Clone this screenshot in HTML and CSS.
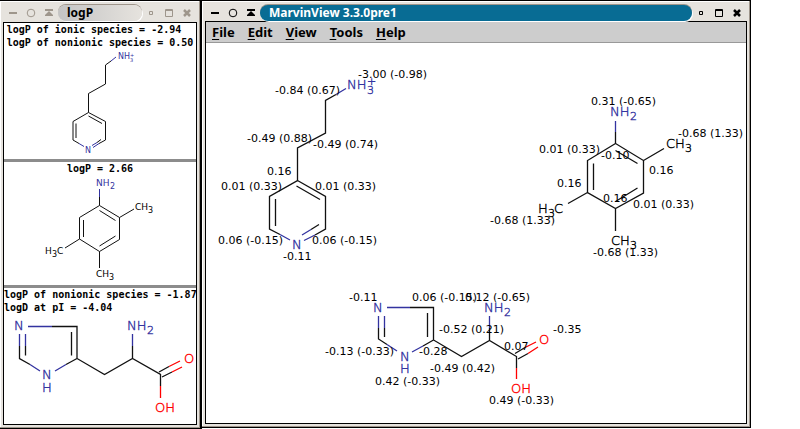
FILE: index.html
```html
<!DOCTYPE html>
<html lang="en">
<head>
<meta charset="utf-8">
<title>MarvinView 3.3.0pre1</title>
<link rel="stylesheet" href="styles.css">
</head>
<body>
<main class="desktop">
  <section class="window window-side" aria-label="logP">
    <header class="titlebar">
      <button class="tool" aria-label="Minimize"><svg viewBox="0 0 18 18"><path class="fill" d="M5 8h8v2H5z"/></svg></button>
      <button class="tool" aria-label="Stick"><svg viewBox="0 0 18 18"><circle class="line" cx="9" cy="9" r="3.8"/></svg></button>
      <button class="tool" aria-label="Shade"><svg viewBox="0 0 18 18"><path class="fill" d="M5 5h8v2H5zM9 7l4 4v1H5v-1z"/></svg></button>
      <h1 class="caption">logP</h1>
      <button class="tool" aria-label="Restore"><svg viewBox="0 0 18 18"><path class="line" d="M7.500 7.500h3v3h-3z"/></svg></button>
      <button class="tool" aria-label="Maximize"><svg viewBox="0 0 18 18"><path class="line" d="M5.500 5.500h7v7h-7zM5.500 6.500h7"/></svg></button>
      <button class="tool" aria-label="Close"><svg viewBox="0 0 18 18"><path class="cross" d="M6 6l6 6M12 6l-6 6"/></svg></button>
    </header>
    <div class="client">
      <article class="cell">
        <p class="result">logP of ionic species = -2.94<br>logP of nonionic species = 0.50</p>
        <svg class="molecule" viewBox="4 49 192 110">
          <path class="bond thin" d="M111 61L105.500 65V84L88.500 93.500V112.500L73 121.500V140L79 143.500M88.500 112.500L105.500 121.500V140L99 143.500M76 123.500V138M88.500 116L102 123.500M97 142.500L101 139.500"/>
          <path class="bond thin n" d="M116 57L111 61M79 143.500L84 146.500M99 143.500L93 147.500M97 142.500L92 145.500"/>
          <g class="atom small n"><text x="118" y="59">NH</text><text class="tiny" x="130" y="62">3</text><text class="tiny" x="130" y="57">+</text><text x="85" y="153">N</text></g>
        </svg>
      </article>
      <article class="cell">
        <p class="result">logP = 2.66</p>
        <svg class="molecule" viewBox="4 175 192 110">
          <path class="bond thin" d="M99.500 197V205.500L119.500 217.500V239.500L99.500 251.500L79.500 239V217.500L99.500 205.500M99.500 210.500L115.500 220.500M83.500 220V237M99.500 246L115.500 236M119.500 217.500L134 209M79.500 239L65 248M99.500 251.500V268"/>
          <path class="bond thin n" d="M99.500 189V197"/>
          <g class="atom medium"><g class="n"><text x="96" y="186">NH</text><text class="sub" x="110" y="189">2</text></g>
          <text x="135" y="210">CH</text><text class="sub" x="148" y="213">3</text>
          <text x="45" y="254">H</text><text class="sub" x="52" y="257">3</text><text x="57" y="254">C</text>
          <text x="96" y="277">CH</text><text class="sub" x="109" y="280">3</text></g>
        </svg>
      </article>
      <article class="cell">
        <p class="result">logP of nonionic species = -1.87<br>logD at pI = -4.04</p>
        <svg class="molecule" viewBox="4 314 192 110">
          <path class="bond" d="M52 326.500H77V358.500L104.500 374.500L132.500 358.500L160.500 374.500V386M71.500 332V355.500M19.500 346V358.500L30 364.500M25.500 346V355.500M66 364.500L77 358.500M132.500 346V358.500M159 372L169 366.500M162 377L172 372"/>
          <path class="bond n" d="M28 326.500H52M19.500 334V346M25.500 334V346M30 364.500L40 371M55 371L66 364.500M132.500 334V346"/>
          <path class="bond o" d="M160.500 386V398M169 366.500L180 361M172 372L182 367"/>
          <g class="atom"><g class="n"><text x="14" y="330">N</text><text x="42" y="379">N</text><text x="42" y="392">H</text><text x="127" y="330">NH</text><text class="sub" x="147" y="334">2</text></g>
          <g class="o"><text x="184" y="363">O</text><text x="155" y="412">OH</text></g></g>
        </svg>
      </article>
    </div>
  </section>

  <section class="window window-main" aria-label="MarvinView 3.3.0pre1">
    <header class="titlebar">
      <button class="tool" aria-label="Minimize"><svg viewBox="0 0 18 18"><path class="fill" d="M5 8h8v2H5z"/></svg></button>
      <button class="tool" aria-label="Stick"><svg viewBox="0 0 18 18"><circle class="line" cx="9" cy="9" r="3.8"/></svg></button>
      <button class="tool" aria-label="Shade"><svg viewBox="0 0 18 18"><path class="fill" d="M5 5h8v2H5zM9 7l4 4v1H5v-1z"/></svg></button>
      <h1 class="caption">MarvinView 3.3.0pre1</h1>
      <button class="tool" aria-label="Restore"><svg viewBox="0 0 18 18"><path class="line" d="M7.500 7.500h3v3h-3z"/></svg></button>
      <button class="tool" aria-label="Maximize"><svg viewBox="0 0 18 18"><path class="line" d="M5.500 5.500h7v7h-7zM5.500 6.500h7"/></svg></button>
      <button class="tool" aria-label="Close"><svg viewBox="0 0 18 18"><path class="cross" d="M6 6l6 6M12 6l-6 6"/></svg></button>
    </header>
    <div class="client">
      <nav class="menubar">
        <button class="menu"><u>F</u>ile</button>
        <button class="menu"><u>E</u>dit</button>
        <button class="menu"><u>V</u>iew</button>
        <button class="menu"><u>T</u>ools</button>
        <button class="menu"><u>H</u>elp</button>
      </nav>
      <svg class="molecule canvas" viewBox="206 43 540 380">
        <path class="bond" d="M336 94.500L325.500 100.500V133L297.500 148V180.500L269.500 196.500V229L280 234.500M297.500 180.500L325.500 196.500V229L315 235M275.500 199V226M296.500 186L320 199.500M311 229.500L319 224.500"/>
        <path class="bond n" d="M346 88.500L336 94.500M280 234.500L290 240M315 235L304 240.500M311 229.500L302 235"/>
        <g class="atom n"><text x="347" y="89">NH</text><text class="sub" x="367" y="94">3</text><text class="sub" x="367" y="85">+</text><text x="292" y="249">N</text></g>

        <path class="bond" d="M615.500 132V143.500L643.500 160.500V193L615.500 208.500L587.500 192.500V160.500L615.500 143.500M615.500 150.500L637.500 163.500M593.500 163.500V190M615.500 201.500L637.500 188M643.500 160.500L664 148.500M587.500 192.500L568 203.500M615.500 208.500V231"/>
        <path class="bond n" d="M615.500 121V132"/>
        <g class="atom"><g class="n"><text x="610" y="116">NH</text><text class="sub" x="630" y="120">2</text></g>
        <text x="666" y="148">CH</text><text class="sub" x="685" y="152">3</text>
        <text x="538" y="213">H</text><text class="sub" x="548" y="217">3</text><text x="554" y="213">C</text>
        <text x="611" y="245">CH</text><text class="sub" x="630" y="249">3</text></g>

        <path class="bond" d="M410 307.500H433.500V340L461.500 356.500L489.500 340.500L516.500 356.500V368M427.500 313V337M378.500 328V339L387 344.500M384.500 328V337M423 346L433.500 340M489.500 328V340.500M515 353.500L525 347.500M518 359L528 353.500"/>
        <path class="bond n" d="M387 307.500H410M378.500 316V328M384.500 316V328M387 344.500L397 351M412 352L423 346M489.500 316V328"/>
        <path class="bond o" d="M516.500 368V379M525 347.500L536 342M528 353.500L538 347"/>
        <g class="atom"><g class="n"><text x="373" y="312">N</text><text x="400" y="361">N</text><text x="400" y="373">H</text><text x="484" y="312">NH</text><text class="sub" x="504" y="316">2</text></g>
        <g class="o"><text x="539" y="344">O</text><text x="511" y="393">OH</text></g></g>

        <g class="value">
          <text x="358" y="78">-3.00 (-0.98)</text><text x="275" y="94">-0.84 (0.67)</text><text x="247" y="142">-0.49 (0.88)</text><text x="313" y="148">-0.49 (0.74)</text><text x="267" y="175">0.16</text><text x="221" y="190">0.01 (0.33)</text><text x="315" y="190">0.01 (0.33)</text><text x="218" y="244">0.06 (-0.15)</text><text x="312" y="244">0.06 (-0.15)</text><text x="283" y="260">-0.11</text>
          <text x="591" y="105">0.31 (-0.65)</text><text x="539" y="153">0.01 (0.33)</text><text x="601" y="159">-0.10</text><text x="678" y="137">-0.68 (1.33)</text><text x="649" y="174">0.16</text><text x="557" y="187">0.16</text><text x="603" y="202">0.16</text><text x="633" y="208">0.01 (0.33)</text><text x="490" y="224">-0.68 (1.33)</text><text x="593" y="256">-0.68 (1.33)</text>
          <text x="349" y="301">-0.11</text><text x="412" y="301">0.06 (-0.15)</text><text x="465" y="301">0.12 (-0.65)</text><text x="439" y="333">-0.52 (0.21)</text><text x="553" y="333">-0.35</text><text x="504" y="350">0.07</text><text x="325" y="355">-0.13 (-0.33)</text><text x="419" y="355">-0.28</text><text x="430" y="372">-0.49 (0.42)</text><text x="375" y="385">0.42 (-0.33)</text><text x="489" y="404">0.49 (-0.33)</text>
        </g>
      </svg>
    </div>
  </section>
</main>
</body>
</html>
```
FILE: styles.css
```css
* {
  box-sizing: border-box;
}

body {
  margin: 0;
  background: #fff;
  font-family: "Noto Sans", sans-serif;
}

button {
  border: 0;
  background: none;
  padding: 0;
  color: inherit;
  font: inherit;
}

.desktop {
  display: grid;
  grid-template-columns: minmax(0, 202fr) minmax(0, 549fr) minmax(0, 49fr);
  align-items: start;
}

.window {
  border: 1px solid #000;
  border-left: 0;
  background: #e6e3de;
  box-shadow: inset -1px -1px #9e958b, inset 1px 1px #fff;
  padding: 0 3px 3px;
}

.window-side {
  border-right-width: 2px;
  color: #9e968c;
}

.titlebar {
  display: flex;
  align-items: center;
  height: 21px;
  padding: 3px 1px 0;
}

.window-main .titlebar {
  height: 20px;
}

.tool {
  flex: none;
  width: 18px;
  height: 18px;
}

.tool svg {
  display: block;
}

.fill {
  fill: currentColor;
}

.line {
  fill: none;
  stroke: currentColor;
}

.cross {
  stroke: currentColor;
  stroke-width: 2.5;
}

.caption {
  flex: 1;
  height: 16px;
  margin: 0;
  padding-left: 9px;
  border-radius: 8px;
  background: #086c94;
  box-shadow: 0 -1px #9e958b, 1px 1px #fff;
  color: #fff;
  font-size: 12px;
  line-height: 16px;
  white-space: nowrap;
}

.window-side .caption {
  background: linear-gradient(90deg, #c4c4c4, #e6e3de);
  color: #000;
}

.client {
  border: 1px solid #000;
  background: #fff;
  color: #000;
}

.cell + .cell {
  border-top: 3px solid #8c8c8c;
}

.result {
  width: fit-content;
  margin: 0 auto;
  font: bold 10px/13px "DejaVu Sans Mono", monospace;
  white-space: nowrap;
}

.molecule {
  display: block;
  width: 100%;
  font-family: "DejaVu Sans", sans-serif;
}

.menubar {
  display: flex;
  gap: 13px;
  height: 21px;
  padding-left: 6px;
  border-bottom: 1px solid #999;
  background: #cdcdcd;
  font-size: 13px;
  font-weight: bold;
}

.menu u {
  text-underline-offset: 2px;
}

.bond {
  fill: none;
  stroke: #111;
  stroke-width: 1.3;
}

.bond.thin {
  stroke-width: 1;
}

.bond.n {
  stroke: #3333a0;
}

.bond.o {
  stroke: #f00;
}

.atom {
  fill: #000;
  stroke: #000;
  stroke-width: 0.4;
  font-size: 13px;
  font-weight: 200;
}

.medium {
  stroke-width: 0;
  font-size: 9px;
  font-weight: 400;
}

.small {
  stroke-width: 0;
  font-size: 8px;
  font-weight: 400;
}

.sub {
  font-size: 11px;
}

.medium .sub {
  font-size: 8px;
}

.tiny {
  font-size: 5px;
}

.atom.n,
.atom .n {
  fill: #3333a0;
  stroke: #3333a0;
}

.atom .o {
  fill: #f00;
  stroke: #f00;
}

.value {
  font-size: 11px;
}
```
